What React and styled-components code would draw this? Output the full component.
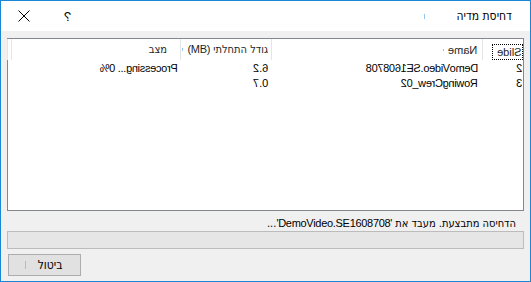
import { Fragment } from "react"
import styled, { createGlobalStyle } from "styled-components"

const GlobalStyle = createGlobalStyle`
    body {
        margin: 0;
        font-family: "Liberation Sans", "DejaVu Sans", sans-serif;
        font-size: 11px;
        color: #000;
    }
`

const Window = styled.div`
    width: 531px;
    height: 282px;
    box-sizing: border-box;
    border: 1px solid #1c86d6;
    background-color: #f0f0f0;
    direction: rtl;
    display: flex;
    flex-direction: column;
    overflow: hidden;
`

const Hebrew = styled.span`
    font-family: "Liberation Sans Narrow", "DejaVu Sans Condensed", "Liberation Sans", sans-serif;
    font-size: ${props => props.$size || 11}px;
`

const Latin = styled.span`
    font-family: "Liberation Sans", sans-serif;
    font-size: 11px;
    letter-spacing: -0.3px;
`

const Caret = styled.span`
    display: inline-block;
    width: 1px;
    height: ${props => props.$h || 5}px;
    background-color: #8fc6f2;
    margin-right: ${props => props.$gap || 0}px;
`

const TitleBar = styled.div`
    height: 30px;
    background-color: #fff;
    display: flex;
    align-items: center;
    padding: 0 18px 0 17px;
`

const Title = styled.div`
    flex: 1;
    display: flex;
    align-items: center;
`

const HelpButton = styled.span`
    display: inline-block;
    transform: scaleX(-1);
    font-size: 13px;
    margin-left: 34px;
`

const CloseButton = styled.svg`
    width: 12px;
    height: 12px;
    display: block;
`

const Body = styled.div`
    flex: 1;
    display: flex;
    flex-direction: column;
    padding: 7px 6px 0 6px;
`

const ListBox = styled.div`
    height: 173px;
    box-sizing: border-box;
    border: 1px solid #828790;
    background-color: #fff;
    display: grid;
    grid-template-columns: 41px 211px 91px 169px 1fr;
    grid-template-rows: 21px 15px 15px;
    align-content: start;
`

const HeaderCell = styled.div`
    border-left: 1px solid #e5e5e5;
    display: flex;
    align-items: center;
    padding-right: ${props => props.$pad || 3}px;
    color: #1e1e1e;
    white-space: nowrap;
    overflow: hidden;
`

const FocusLabel = styled.span`
    outline: 1px dotted #000;
    padding: 1px 1px 1px 4px;
    margin-top: 4px;
`

const Cell = styled.div`
    display: flex;
    align-items: center;
    padding-right: ${props => props.$pad || 2}px;
    white-space: nowrap;
`

const Mirror = styled.span`
    display: inline-block;
    transform: scaleX(-1);
    letter-spacing: ${props => props.$tight ? -0.3 : 0}px;
`

const Status = styled.div`
    height: 14px;
    margin-top: 5px;
    padding-right: 8px;
    display: flex;
    align-items: center;
    white-space: nowrap;
`

const ProgressBar = styled.div`
    height: 18px;
    box-sizing: border-box;
    margin-top: 1px;
    border: 1px solid #bcbcbc;
    background-color: #e6e6e6;
`

const Footer = styled.div`
    display: flex;
    justify-content: flex-end;
    margin-top: 5px;
    padding-left: 1px;
`

const Button = styled.button`
    width: 73px;
    height: 22px;
    box-sizing: border-box;
    border: 1px solid #adadad;
    background-color: #e1e1e1;
    font-family: inherit;
    color: #000;
    padding: 0 2px 0 0;
    direction: rtl;
    display: flex;
    align-items: center;
    justify-content: center;
`

const rows = [
    { slide: "2", name: "DemoVideo.SE1608708", size: "6.2", status: "Processing... 0%" },
    { slide: "3", name: "RowingCrew_02", size: "0.7", status: "" },
]

export default function App() {
    return (
        <>
            <GlobalStyle />
            <Window>
                <TitleBar>
                    <Title>
                        <Hebrew $size={12}>דחיסת מדיה</Hebrew>
                        <Caret $gap={31} />
                    </Title>
                    <HelpButton>?</HelpButton>
                    <CloseButton viewBox="0 0 12 12">
                        <path d="M0.5 0.5 L11.5 11.5 M11.5 0.5 L0.5 11.5" stroke="#000" strokeWidth="1" fill="none" />
                    </CloseButton>
                </TitleBar>
                <Body>
                    <ListBox>
                        <HeaderCell $pad={1}>
                            <FocusLabel><Mirror>Slide</Mirror></FocusLabel>
                        </HeaderCell>
                        <HeaderCell $pad={5}>
                            <Mirror>Name</Mirror>
                            <Caret $h={2} $gap={4} />
                        </HeaderCell>
                        <HeaderCell $pad={3}>
                            <Hebrew>גודל התחלתי <Latin>(MB)</Latin></Hebrew>
                            <Caret $h={3} $gap={4} />
                        </HeaderCell>
                        <HeaderCell $pad={13}><Hebrew>מצב</Hebrew></HeaderCell>
                        <HeaderCell />
                        {rows.map(r => (
                            <Fragment key={r.slide}>
                                <Cell $pad={1}><Mirror>{r.slide}</Mirror></Cell>
                                <Cell $pad={4}><Mirror $tight>{r.name}</Mirror></Cell>
                                <Cell $pad={3}><Mirror>{r.size}</Mirror></Cell>
                                <Cell $pad={2}><Mirror $tight>{r.status}</Mirror></Cell>
                                <Cell />
                            </Fragment>
                        ))}
                    </ListBox>
                    <Status>
                        <Hebrew>הדחיסה מתבצעת. מעבד את <Latin>'DemoVideo.SE1608708'</Latin>...</Hebrew>
                    </Status>
                    <ProgressBar />
                    <Footer>
                        <Button>
                            <Hebrew $size={12}>ביטול</Hebrew>
                            <Caret $h={8} $gap={12} />
                        </Button>
                    </Footer>
                </Body>
            </Window>
        </>
    )
}
